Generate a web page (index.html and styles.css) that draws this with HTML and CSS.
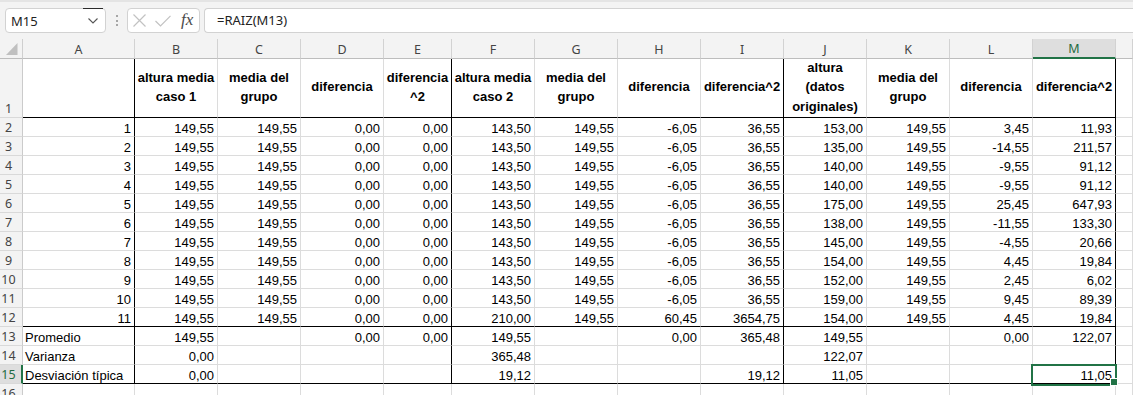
FILE: index.html
```html
<!DOCTYPE html>
<html lang="es">
<head>
<meta charset="utf-8">
<title>Hoja de cálculo</title>
<link rel="stylesheet" href="styles.css">
</head>
<body>
<div class="bar">
  <div class="namebox">
    <span class="nb-text">M15</span>
    <span class="nb-drop"><svg width="10" height="6" viewBox="0 0 10 6"><path d="M0.5 0.5 L5 5 L9.5 0.5" fill="none" stroke="#555" stroke-width="1.1"/></svg></span>
  </div>
  <div class="dots"><i></i><i></i><i></i></div>
  <div class="fxbox">
    <svg class="ic-x" width="13" height="13" viewBox="0 0 13 13"><path d="M0.5 0.5 L12.5 12.5 M12.5 0.5 L0.5 12.5" stroke="#c2c2c2" stroke-width="1.2" fill="none"/></svg>
    <svg class="ic-ok" width="16" height="12" viewBox="0 0 16 12"><path d="M0.5 6 L5.5 11 L15.5 0.8" stroke="#c2c2c2" stroke-width="1.2" fill="none"/></svg>
    <span class="fx">fx</span>
  </div>
  <div class="formula">=RAIZ(M13)</div>
</div>

<div class="sheet">
  <div class="hdr">
    <div class="corner"><svg width="23" height="19" viewBox="0 0 23 19"><polygon points="17.5,4 17.5,16 6,16" fill="#c0c0c0"/></svg></div>
    <div class="ch">A</div><div class="ch">B</div><div class="ch">C</div><div class="ch">D</div><div class="ch">E</div><div class="ch">F</div><div class="ch">G</div><div class="ch">H</div><div class="ch">I</div><div class="ch">J</div><div class="ch">K</div><div class="ch">L</div><div class="ch sel">M</div><div class="ch"></div>
  </div>

  <div class="r kb first">
    <div class="rh">1</div>
    <div class="c"></div>
    <div class="c h">altura media caso 1</div>
    <div class="c h">media del grupo</div>
    <div class="c h">diferencia</div>
    <div class="c h">diferencia ^2</div>
    <div class="c h">altura media caso 2</div>
    <div class="c h">media del grupo</div>
    <div class="c h">diferencia</div>
    <div class="c h">diferencia^2</div>
    <div class="c h">altura<br>(datos<br>originales)</div>
    <div class="c h">media del grupo</div>
    <div class="c h">diferencia</div>
    <div class="c h">diferencia^2</div>
    <div class="c"></div>
  </div>

  <div class="r"><div class="rh">2</div><div class="c">1</div><div class="c">149,55</div><div class="c">149,55</div><div class="c">0,00</div><div class="c">0,00</div><div class="c">143,50</div><div class="c">149,55</div><div class="c">-6,05</div><div class="c">36,55</div><div class="c">153,00</div><div class="c">149,55</div><div class="c">3,45</div><div class="c">11,93</div><div class="c"></div></div>
  <div class="r"><div class="rh">3</div><div class="c">2</div><div class="c">149,55</div><div class="c">149,55</div><div class="c">0,00</div><div class="c">0,00</div><div class="c">143,50</div><div class="c">149,55</div><div class="c">-6,05</div><div class="c">36,55</div><div class="c">135,00</div><div class="c">149,55</div><div class="c">-14,55</div><div class="c">211,57</div><div class="c"></div></div>
  <div class="r"><div class="rh">4</div><div class="c">3</div><div class="c">149,55</div><div class="c">149,55</div><div class="c">0,00</div><div class="c">0,00</div><div class="c">143,50</div><div class="c">149,55</div><div class="c">-6,05</div><div class="c">36,55</div><div class="c">140,00</div><div class="c">149,55</div><div class="c">-9,55</div><div class="c">91,12</div><div class="c"></div></div>
  <div class="r"><div class="rh">5</div><div class="c">4</div><div class="c">149,55</div><div class="c">149,55</div><div class="c">0,00</div><div class="c">0,00</div><div class="c">143,50</div><div class="c">149,55</div><div class="c">-6,05</div><div class="c">36,55</div><div class="c">140,00</div><div class="c">149,55</div><div class="c">-9,55</div><div class="c">91,12</div><div class="c"></div></div>
  <div class="r"><div class="rh">6</div><div class="c">5</div><div class="c">149,55</div><div class="c">149,55</div><div class="c">0,00</div><div class="c">0,00</div><div class="c">143,50</div><div class="c">149,55</div><div class="c">-6,05</div><div class="c">36,55</div><div class="c">175,00</div><div class="c">149,55</div><div class="c">25,45</div><div class="c">647,93</div><div class="c"></div></div>
  <div class="r"><div class="rh">7</div><div class="c">6</div><div class="c">149,55</div><div class="c">149,55</div><div class="c">0,00</div><div class="c">0,00</div><div class="c">143,50</div><div class="c">149,55</div><div class="c">-6,05</div><div class="c">36,55</div><div class="c">138,00</div><div class="c">149,55</div><div class="c">-11,55</div><div class="c">133,30</div><div class="c"></div></div>
  <div class="r"><div class="rh">8</div><div class="c">7</div><div class="c">149,55</div><div class="c">149,55</div><div class="c">0,00</div><div class="c">0,00</div><div class="c">143,50</div><div class="c">149,55</div><div class="c">-6,05</div><div class="c">36,55</div><div class="c">145,00</div><div class="c">149,55</div><div class="c">-4,55</div><div class="c">20,66</div><div class="c"></div></div>
  <div class="r"><div class="rh">9</div><div class="c">8</div><div class="c">149,55</div><div class="c">149,55</div><div class="c">0,00</div><div class="c">0,00</div><div class="c">143,50</div><div class="c">149,55</div><div class="c">-6,05</div><div class="c">36,55</div><div class="c">154,00</div><div class="c">149,55</div><div class="c">4,45</div><div class="c">19,84</div><div class="c"></div></div>
  <div class="r"><div class="rh">10</div><div class="c">9</div><div class="c">149,55</div><div class="c">149,55</div><div class="c">0,00</div><div class="c">0,00</div><div class="c">143,50</div><div class="c">149,55</div><div class="c">-6,05</div><div class="c">36,55</div><div class="c">152,00</div><div class="c">149,55</div><div class="c">2,45</div><div class="c">6,02</div><div class="c"></div></div>
  <div class="r"><div class="rh">11</div><div class="c">10</div><div class="c">149,55</div><div class="c">149,55</div><div class="c">0,00</div><div class="c">0,00</div><div class="c">143,50</div><div class="c">149,55</div><div class="c">-6,05</div><div class="c">36,55</div><div class="c">159,00</div><div class="c">149,55</div><div class="c">9,45</div><div class="c">89,39</div><div class="c"></div></div>
  <div class="r kb"><div class="rh">12</div><div class="c">11</div><div class="c">149,55</div><div class="c">149,55</div><div class="c">0,00</div><div class="c">0,00</div><div class="c">210,00</div><div class="c">149,55</div><div class="c">60,45</div><div class="c">3654,75</div><div class="c">154,00</div><div class="c">149,55</div><div class="c">4,45</div><div class="c">19,84</div><div class="c"></div></div>
  <div class="r"><div class="rh">13</div><div class="c t">Promedio</div><div class="c">149,55</div><div class="c"></div><div class="c">0,00</div><div class="c">0,00</div><div class="c">149,55</div><div class="c"></div><div class="c">0,00</div><div class="c">365,48</div><div class="c">149,55</div><div class="c"></div><div class="c">0,00</div><div class="c">122,07</div><div class="c"></div></div>
  <div class="r"><div class="rh">14</div><div class="c t">Varianza</div><div class="c">0,00</div><div class="c"></div><div class="c"></div><div class="c"></div><div class="c">365,48</div><div class="c"></div><div class="c"></div><div class="c"></div><div class="c">122,07</div><div class="c"></div><div class="c"></div><div class="c"></div><div class="c"></div></div>
  <div class="r kb"><div class="rh sel">15</div><div class="c t">Desviación típica</div><div class="c">0,00</div><div class="c"></div><div class="c"></div><div class="c"></div><div class="c">19,12</div><div class="c"></div><div class="c"></div><div class="c">19,12</div><div class="c">11,05</div><div class="c"></div><div class="c"></div><div class="c sel">11,05</div><div class="c"></div></div>
  <div class="r plain"><div class="rh">16</div><div class="c"></div><div class="c"></div><div class="c"></div><div class="c"></div><div class="c"></div><div class="c"></div><div class="c"></div><div class="c"></div><div class="c"></div><div class="c"></div><div class="c"></div><div class="c"></div><div class="c"></div><div class="c"></div></div>
</div>
</body>
</html>
```

FILE: styles.css
```css
* { box-sizing: border-box; margin: 0; padding: 0; }
html, body { width: 1133px; height: 395px; overflow: hidden; }
body { background: #fff; font-family: "Liberation Sans", Arial, sans-serif; font-size: 13px; color: #000; }

/* formula bar */
.bar { height: 39px; background: #f3f3f3; border-top: 2px solid #e4e4e4; display: flex; align-items: flex-start; padding: 6px 0 0 5px; }
.namebox { width: 101px; height: 25px; background: #fff; border: 1px solid #d2d2d2; border-radius: 4px; display: flex; align-items: center; font-family: "Noto Sans", "Open Sans", sans-serif; font-size: 13px; color: #222; }
.nb-text { flex: 1; padding-left: 5px; }
.nb-drop { width: 20px; align-self: stretch; margin-top: -1px; margin-right: 2px; border-top: 1px solid #2b2b2b; display: flex; align-items: center; justify-content: center; }
.dots { width: 21px; height: 25px; display: flex; flex-direction: column; align-items: center; justify-content: center; gap: 2.5px; }
.dots i { width: 2px; height: 2px; background: #8c8c8c; border-radius: 50%; display: block; }
.fxbox { width: 73px; height: 25px; background: #fff; border: 1px solid #d2d2d2; border-radius: 4px; display: flex; align-items: center; }
.ic-x { margin-left: 5px; }
.ic-ok { margin-left: 9px; }
.fx { margin-left: 10px; font-family: "Liberation Serif", serif; font-style: italic; font-size: 17px; color: #4a4a4a; line-height: 1; margin-top: -2px; }
.formula { flex: 1; margin-left: 4px; height: 25px; background: #fff; border: 1px solid #d2d2d2; border-right: none; border-radius: 4px 0 0 4px; padding-left: 12px; font-family: "Noto Sans", "Open Sans", sans-serif; font-size: 13px; line-height: 23px; color: #222; }

/* grid */
.sheet { display: grid; grid-template-columns: 23px 112px 83px 83px 83px 68px repeat(8, 83px) 1fr; grid-template-rows: 20px 59px repeat(15, 19px); }
.hdr, .r { display: contents; }

.corner { background: #f3f3f3; border-right: 1px solid #cfcfcf; border-bottom: 1px solid #bdbdbd; }
.corner svg { display: block; }
.ch { background: #f3f3f3; border-right: 1px solid #d2d2d2; border-bottom: 1px solid #bdbdbd; font-family: "Noto Sans", "Open Sans", sans-serif; font-size: 12.5px; color: #444; display: flex; align-items: center; justify-content: center; padding-top: 1px; }
.ch.sel { background: #dedede; color: #1e6b41; border-bottom: 2px solid #217346; }

.rh { background: #f3f3f3; border-right: 1px solid #cbcbcb; border-bottom: 1px solid #d9d9d9; font-family: "Noto Sans", "Open Sans", sans-serif; font-size: 12.5px; color: #444; display: flex; align-items: flex-end; justify-content: center; padding-right: 5px; line-height: 17px; }
.rh.sel { background: #dedede; color: #1e6b41; border-right: 2px solid #217346; padding-right: 4px; }

.c { border-right: 1px solid #dcdcdc; border-bottom: 1px solid #dcdcdc; padding: 0 3px 0 2px; display: flex; align-items: flex-end; justify-content: flex-end; white-space: nowrap; line-height: 15px; }
.c.t { justify-content: flex-start; }
.c.h { font-weight: bold; white-space: normal; text-align: center; justify-content: center; align-items: center; line-height: 19.5px; padding: 0 1px 2px; }

.r:not(.plain) > :nth-child(2),
.r:not(.plain) > :nth-child(6),
.r:not(.plain) > :nth-child(10),
.r:not(.plain) > :nth-child(14) { border-right-color: #000; }
.r.kb > .c:not(:last-child) { border-bottom-color: #000; }

.c.sel { position: relative; }
.c.sel::after { content: ""; position: absolute; left: -2px; top: -1px; right: -2px; bottom: -3px; border: 2px solid #217346; z-index: 2; }
.c.sel::before { content: ""; position: absolute; right: -3px; bottom: -3px; width: 6px; height: 6px; background: #217346; border: 1px solid #fff; z-index: 3; }
```
